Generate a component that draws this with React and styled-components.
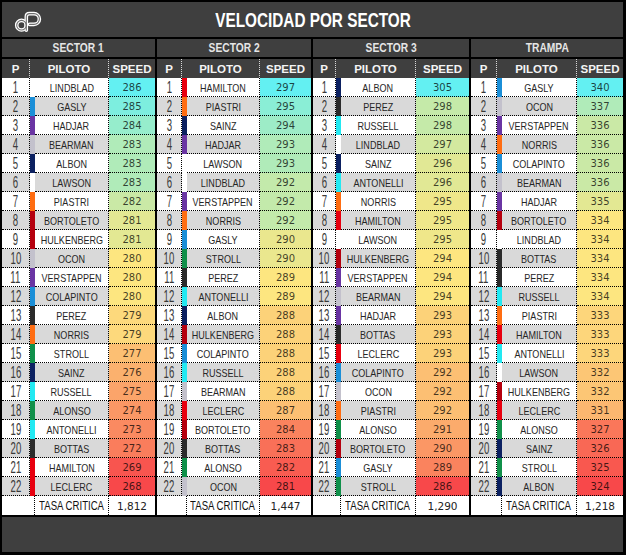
import styled, { createGlobalStyle } from "styled-components";

const GlobalStyle = createGlobalStyle`
  html, body {
    margin: 0;
    padding: 0;
    background: #fff;
  }
  body {
    font-family: "Liberation Sans", Arial, sans-serif;
  }
`

const TEAM = {
  LINDBLAD: '#ffffff', LAWSON: '#ffffff',
  GASLY: '#1b8fd8', COLAPINTO: '#1b8fd8',
  HADJAR: '#6a35a3', VERSTAPPEN: '#6a35a3',
  BEARMAN: '#c3c1cc', OCON: '#c3c1cc',
  ALBON: '#0c2161', SAINZ: '#0c2161',
  PIASTRI: '#ff6d12', NORRIS: '#ff6d12',
  BORTOLETO: '#b5000e', HULKENBERG: '#b5000e',
  PEREZ: '#2b2b2b', BOTTAS: '#2b2b2b',
  STROLL: '#10904a', ALONSO: '#10904a',
  RUSSELL: '#22e9f2', ANTONELLI: '#22e9f2',
  HAMILTON: '#e8000f', LECLERC: '#e8000f',
}

const parse = (list) => list.split(' ').map((s) => {
  const [name, speed] = s.split(':')
  return { name, speed: Number(speed) }
})

const SECTORS = [
  {
    title: 'SECTOR 1', width: 153, cols: [28, 74, 46], tasa: '1,812',
    rows: parse('LINDBLAD:286 GASLY:285 HADJAR:284 BEARMAN:283 ALBON:283 LAWSON:283 PIASTRI:282 BORTOLETO:281 HULKENBERG:281 OCON:280 VERSTAPPEN:280 COLAPINTO:280 PEREZ:279 NORRIS:279 STROLL:277 SAINZ:276 RUSSELL:275 ALONSO:274 ANTONELLI:273 BOTTAS:272 HAMILTON:269 LECLERC:268'),
  },
  {
    title: 'SECTOR 2', width: 154, cols: [25, 73, 51], tasa: '1,447',
    rows: parse('HAMILTON:297 PIASTRI:295 SAINZ:294 HADJAR:293 LAWSON:293 LINDBLAD:292 VERSTAPPEN:292 NORRIS:292 GASLY:290 STROLL:290 PEREZ:289 ANTONELLI:289 ALBON:288 HULKENBERG:288 COLAPINTO:288 RUSSELL:288 BEARMAN:288 LECLERC:287 BORTOLETO:284 BOTTAS:283 ALONSO:282 OCON:281'),
  },
  {
    title: 'SECTOR 3', width: 156, cols: [23, 75, 53], tasa: '1,290',
    rows: parse('ALBON:305 PEREZ:298 RUSSELL:298 LINDBLAD:297 SAINZ:296 ANTONELLI:296 NORRIS:295 HAMILTON:295 LAWSON:295 HULKENBERG:294 VERSTAPPEN:294 BEARMAN:294 HADJAR:293 BOTTAS:293 LECLERC:293 COLAPINTO:292 OCON:292 PIASTRI:292 ALONSO:291 BORTOLETO:290 GASLY:289 STROLL:286'),
  },
  {
    title: 'TRAMPA', width: 152, cols: [26, 75, 46], tasa: '1,218',
    rows: parse('GASLY:340 OCON:337 VERSTAPPEN:336 NORRIS:336 COLAPINTO:336 BEARMAN:336 HADJAR:335 BORTOLETO:334 LINDBLAD:334 BOTTAS:334 PEREZ:334 RUSSELL:334 PIASTRI:333 HAMILTON:333 ANTONELLI:333 LAWSON:332 HULKENBERG:332 LECLERC:331 ALONSO:327 SAINZ:326 STROLL:325 ALBON:324'),
  },
]

// three colour scale: min red, median yellow, max cyan
const RED = [248, 72, 74]
const YELLOW = [253, 230, 128]
const CYAN = [99, 240, 242]
const mix = (a, b, t) => a.map((v, i) => Math.round(v + (b[i] - v) * t))

const makeScale = (values) => {
  const sorted = [...values].sort((a, b) => a - b)
  const n = sorted.length
  const mid = n % 2 ? sorted[(n - 1) / 2] : (sorted[n / 2 - 1] + sorted[n / 2]) / 2
  const min = sorted[0]
  const max = sorted[n - 1]
  return (v) => {
    const c = v >= mid
      ? mix(YELLOW, CYAN, max === mid ? 0 : (v - mid) / (max - mid))
      : mix(RED, YELLOW, (v - min) / (mid - min))
    return `rgb(${c.join(',')})`
  }
}

const Frame = styled.div`
  width: 626px;
  height: 555px;
  box-sizing: border-box;
  padding: 2px 3px 3px 2px;
  background: #000;
  display: flex;
  flex-direction: column;
  gap: 2px;
`

const TitleBar = styled.div`
  height: 35px;
  flex-shrink: 0;
  background: #3f3f3f;
  display: grid;
  grid-template-columns: 1fr auto 1fr;
  align-items: center;
`

const Logo = styled.svg`
  width: 28px;
  height: 21px;
  margin-left: 12px;
  margin-top: 4px;
`

const Title = styled.h1`
  margin: 0;
  color: #fff;
  font-size: 21px;
  font-weight: bold;
  white-space: nowrap;
  transform: scaleX(0.73);
`

const Board = styled.div`
  display: flex;
  gap: 2px;
`

const Sector = styled.div`
  width: ${(p) => p.$w}px;
  display: flex;
  flex-direction: column;
`

const SectorHead = styled.div`
  height: 18px;
  margin-bottom: 2px;
  background: #3f3f3f;
  color: #e6e6e6;
  font-size: 12.5px;
  font-weight: bold;
  display: flex;
  align-items: center;
  justify-content: center;
`

const Squeeze = styled.span`
  display: inline-block;
  white-space: nowrap;
  transform: scaleX(${(p) => p.$sx || 1});
`

const Row = styled.div`
  display: grid;
  grid-template-columns: ${(p) => p.$cols};
  height: 19px;
  background: ${(p) => (p.$alt ? '#d9d9d9' : '#ffffff')};
`

const HeadRow = styled(Row)`
  background: #3f3f3f;
`

const HeadCell = styled.div`
  grid-column: span ${(p) => p.$span || 1};
  display: flex;
  align-items: center;
  justify-content: center;
  color: #f4f4f4;
  font-size: 11.5px;
  font-weight: bold;
  box-sizing: border-box;
  border-right: ${(p) => (p.$divider ? '1px dotted #d8d8d8' : 'none')};
`

const Cell = styled.div`
  grid-column: span ${(p) => p.$span || 1};
  display: flex;
  align-items: center;
  justify-content: center;
  overflow: visible;
  box-sizing: border-box;
  border-bottom: ${(p) => (p.$last ? 'none' : '1px dotted #000')};
  border-right: ${(p) => (p.$divider ? '1px dotted #000' : 'none')};
`

const Pos = styled(Cell)`
  color: #3a3a3a;
  font-size: 16px;
  line-height: 1;
  padding-top: 1px;
`

const TeamBar = styled.div`
  background: ${(p) => p.$color};
`

const Name = styled(Cell)`
  color: #262626;
  font-size: 11px;
  padding-top: 1px;
`

const Speed = styled(Cell)`
  color: rgba(0, 0, 0, 0.74);
  font-family: "DejaVu Sans", Verdana, sans-serif;
  font-size: 10px;
`

const TasaLabel = styled(Cell)`
  color: #111;
  font-size: 12px;
`

const TasaValue = styled(Cell)`
  color: #222;
  font-family: "DejaVu Sans", Verdana, sans-serif;
  font-size: 10.5px;
`

const Footer = styled.div`
  flex: 1;
  background: #3f3f3f;
`

const LOGO_D = "M7.5 9.4 A4.8 4.8 0 1 0 7.5 19 A4.8 4.8 0 1 0 7.5 9.4"
const LOGO_P = "M12.3 19.2 V5.8 Q12.3 2.6 15.5 2.6 H20 A5.4 5.4 0 0 1 20 13.4 H15.6"

const LogoMark = () => (
  <Logo viewBox="0 0 28 21">
    <g fill="none" strokeLinecap="round" strokeLinejoin="round">
      <g stroke="#ffffff" strokeWidth="3.6">
        <path d={LOGO_D} />
        <path d={LOGO_P} />
      </g>
      <g stroke="#6e6e6e" strokeWidth="1.1">
        <path d={LOGO_D} />
        <path d={LOGO_P} />
      </g>
    </g>
  </Logo>
)

const SectorTable = ({ sector }) => {
  const [p, name, speed] = sector.cols
  const cols = `${p}px 5px ${name}px ${speed}px`
  const colorOf = makeScale(sector.rows.map((r) => r.speed))

  return (
    <Sector $w={sector.width}>
      <SectorHead>
        <Squeeze $sx={0.82}>{sector.title}</Squeeze>
      </SectorHead>
      <HeadRow $cols={cols}>
        <HeadCell $divider>P</HeadCell>
        <HeadCell $span={2} $divider>PILOTO</HeadCell>
        <HeadCell>SPEED</HeadCell>
      </HeadRow>
      {sector.rows.map((r, i) => (
        <Row key={r.name} $cols={cols} $alt={i % 2 === 1}>
          <Pos $divider>
            <Squeeze $sx={0.6}>{i + 1}</Squeeze>
          </Pos>
          <TeamBar $color={TEAM[r.name]} />
          <Name $divider>
            <Squeeze $sx={0.82}>{r.name}</Squeeze>
          </Name>
          <Speed style={{ background: colorOf(r.speed) }}>{r.speed}</Speed>
        </Row>
      ))}
      <Row $cols={cols}>
        <Cell $span={2} $divider $last />
        <TasaLabel $divider $last>
          <Squeeze $sx={0.8}>TASA CRITICA</Squeeze>
        </TasaLabel>
        <TasaValue $last>{sector.tasa}</TasaValue>
      </Row>
    </Sector>
  )
}

const App = () => (
  <>
    <GlobalStyle />
    <Frame>
      <TitleBar>
        <LogoMark />
        <Title>VELOCIDAD POR SECTOR</Title>
        <div />
      </TitleBar>
      <Board>
        {SECTORS.map((s) => (
          <SectorTable key={s.title} sector={s} />
        ))}
      </Board>
      <Footer />
    </Frame>
  </>
)

export default App;
